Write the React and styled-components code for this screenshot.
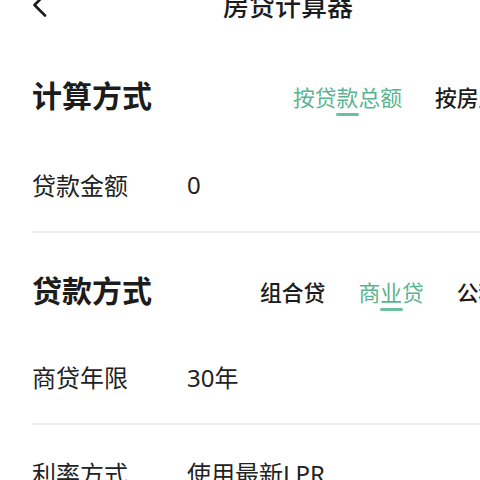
import styled, { createGlobalStyle } from "styled-components";

const Global = createGlobalStyle`
  html, body {
    margin: 0;
    padding: 0;
    background: #fff;
    overflow: hidden;
  }
  body {
    width: 480px;
    height: 480px;
    font-family: "Noto Sans CJK SC", "Noto Sans", sans-serif;
    color: #1c1c1c;
  }
`;

const Page = styled.div`
  width: 576px;
  margin-top: -22px;
`;
const Header = styled.div`
  height: 54px;
  display: flex;
  align-items: center;
  justify-content: center;
  padding: 0 32px;
  position: relative;
`;
const Back = styled.div`
  position: absolute;
  left: 30px;
  top: 15px;
  width: 24px;
  height: 24px;
  display: flex;
`;
const Title = styled.h1`
  margin: 0;
  font-size: 26px;
  font-weight: 500;
  line-height: 1;
`;
const Section = styled.section`
  padding: ${(p) => p.$top}px 0 0 32px;
`;
const HeadRow = styled.div`
  height: 56px;
  display: flex;
  align-items: center;
  justify-content: space-between;
  padding-right: 32px;
  white-space: nowrap;
`;
const Heading = styled.h2`
  margin: 0;
  font-size: 30px;
  font-weight: 700;
  line-height: 1;
`;
const Tabs = styled.div`
  display: flex;
  gap: 33px;
  padding-top: 10px;
`;
const Tab = styled.div`
  display: flex;
  flex-direction: column;
  align-items: center;
  font-size: 21.8px;
  line-height: 30px;
  font-weight: ${(p) => (p.$active ? 400 : 500)};
  color: ${(p) => (p.$active ? "#5bb491" : "#1c1c1c")};

  &::after {
    content: "";
    margin-top: 1px;
    width: 23px;
    height: 3px;
    border-radius: 2px;
    background: ${(p) => (p.$active ? "#6cc0a0" : "transparent")};
  }
`;
const Field = styled.div`
  height: 94px;
  display: flex;
  align-items: center;
  border-bottom: 2px solid #efefef;
  margin-top: ${(p) => p.$gap || 0}px;
  font-size: 24px;
  white-space: nowrap;
`;
const Label = styled.span`
  width: 155px;
  flex: none;
  color: #222;
`;
const Value = styled.span`
  color: #222;
  font-family: "Noto Sans", "Noto Sans CJK SC", sans-serif;
`;

function Chevron() {
  return (
    <svg width="24" height="24" viewBox="0 0 24 24" fill="none">
      <path
        d="M15 1.5 L4.5 12 L15 22.5"
        stroke="#1c1c1c"
        strokeWidth="2.6"
        strokeLinecap="round"
        strokeLinejoin="round"
      />
    </svg>
  );
}

export default function App() {
  return (
    <>
      <Global />
      <Page>
        <Header>
          <Back>
            <Chevron />
          </Back>
          <Title>房贷计算器</Title>
        </Header>

        <Section $top={34}>
          <HeadRow>
            <Heading>计算方式</Heading>
            <Tabs>
              <Tab $active>按贷款总额</Tab>
              <Tab>按房屋总价</Tab>
            </Tabs>
          </HeadRow>
          <Field $gap={15}>
            <Label>贷款金额</Label>
            <Value>0</Value>
          </Field>
        </Section>

        <Section $top={28}>
          <HeadRow>
            <Heading>贷款方式</Heading>
            <Tabs>
              <Tab>组合贷</Tab>
              <Tab $active>商业贷</Tab>
              <Tab>公积金贷</Tab>
            </Tabs>
          </HeadRow>
          <Field $gap={12}>
            <Label>商贷年限</Label>
            <Value>30年</Value>
          </Field>
          <Field>
            <Label>利率方式</Label>
            <Value>使用最新LPR</Value>
          </Field>
        </Section>
      </Page>
    </>
  );
}
